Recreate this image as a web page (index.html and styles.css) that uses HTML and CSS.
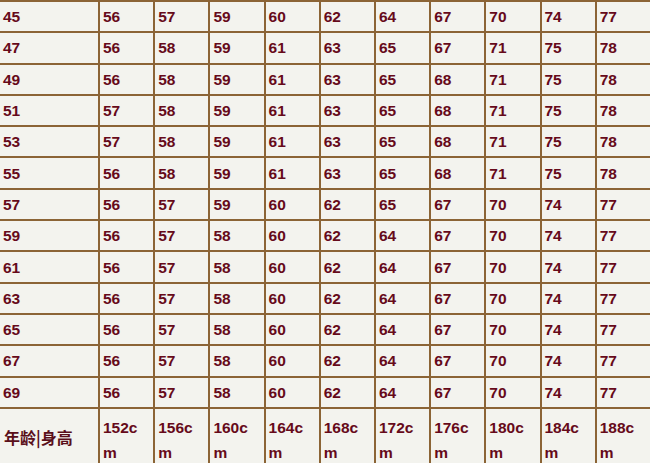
FILE: index.html
```html
<!DOCTYPE html>
<html lang="zh">
<head>
<meta charset="utf-8">
<title>年龄身高对照表</title>
<link rel="stylesheet" href="styles.css">
</head>
<body>
<table class="chart">
<colgroup>
<col class="c-age">
<col class="c-h"><col class="c-h"><col class="c-h"><col class="c-h"><col class="c-h">
<col class="c-h"><col class="c-h"><col class="c-h"><col class="c-h"><col class="c-h">
</colgroup>
<tbody>
<tr><td>45</td><td>56</td><td>57</td><td>59</td><td>60</td><td>62</td><td>64</td><td>67</td><td>70</td><td>74</td><td>77</td></tr>
<tr><td>47</td><td>56</td><td>58</td><td>59</td><td>61</td><td>63</td><td>65</td><td>67</td><td>71</td><td>75</td><td>78</td></tr>
<tr><td>49</td><td>56</td><td>58</td><td>59</td><td>61</td><td>63</td><td>65</td><td>68</td><td>71</td><td>75</td><td>78</td></tr>
<tr><td>51</td><td>57</td><td>58</td><td>59</td><td>61</td><td>63</td><td>65</td><td>68</td><td>71</td><td>75</td><td>78</td></tr>
<tr><td>53</td><td>57</td><td>58</td><td>59</td><td>61</td><td>63</td><td>65</td><td>68</td><td>71</td><td>75</td><td>78</td></tr>
<tr><td>55</td><td>56</td><td>58</td><td>59</td><td>61</td><td>63</td><td>65</td><td>68</td><td>71</td><td>75</td><td>78</td></tr>
<tr><td>57</td><td>56</td><td>57</td><td>59</td><td>60</td><td>62</td><td>65</td><td>67</td><td>70</td><td>74</td><td>77</td></tr>
<tr><td>59</td><td>56</td><td>57</td><td>58</td><td>60</td><td>62</td><td>64</td><td>67</td><td>70</td><td>74</td><td>77</td></tr>
<tr><td>61</td><td>56</td><td>57</td><td>58</td><td>60</td><td>62</td><td>64</td><td>67</td><td>70</td><td>74</td><td>77</td></tr>
<tr><td>63</td><td>56</td><td>57</td><td>58</td><td>60</td><td>62</td><td>64</td><td>67</td><td>70</td><td>74</td><td>77</td></tr>
<tr><td>65</td><td>56</td><td>57</td><td>58</td><td>60</td><td>62</td><td>64</td><td>67</td><td>70</td><td>74</td><td>77</td></tr>
<tr><td>67</td><td>56</td><td>57</td><td>58</td><td>60</td><td>62</td><td>64</td><td>67</td><td>70</td><td>74</td><td>77</td></tr>
<tr><td>69</td><td>56</td><td>57</td><td>58</td><td>60</td><td>62</td><td>64</td><td>67</td><td>70</td><td>74</td><td>77</td></tr>
<tr class="head-row"><td class="label">年龄|身高</td><td>152cm</td><td>156cm</td><td>160cm</td><td>164cm</td><td>168cm</td><td>172cm</td><td>176cm</td><td>180cm</td><td>184cm</td><td>188cm</td></tr>
</tbody>
</table>
</body>
</html>
```
FILE: styles.css
```css
html, body {
  margin: 0;
  padding: 0;
  background: #f3f3ee;
  overflow: hidden;
}

.chart {
  border-collapse: collapse;
  table-layout: fixed;
  width: 652px;
  margin-left: -2px;
  margin-top: 0;
  background: #f3f3ee;
  font-family: "Liberation Sans", Arial, "Noto Sans CJK SC", sans-serif;
  font-weight: bold;
  font-size: 15.5px;
  color: #660a1a;
}

.c-age { width: 100px; }
.c-h { width: 55.2px; }

.chart td {
  border: 2px solid #8b6436;
  height: 29.3px;
  padding: 0 3px;
  vertical-align: middle;
  text-align: left;
  line-height: 17px;
}

.head-row td {
  height: 58px;
  line-height: 25px;
  word-break: break-all;
  padding-right: 10px;
}

.head-row td.label {
  font-family: "Noto Sans CJK SC", "Liberation Sans", sans-serif;
  font-size: 16px;
  font-weight: bold;
  color: #5a0f1a;
  padding: 0 4px 4px 4px;
  word-break: normal;
  white-space: nowrap;
}
```
